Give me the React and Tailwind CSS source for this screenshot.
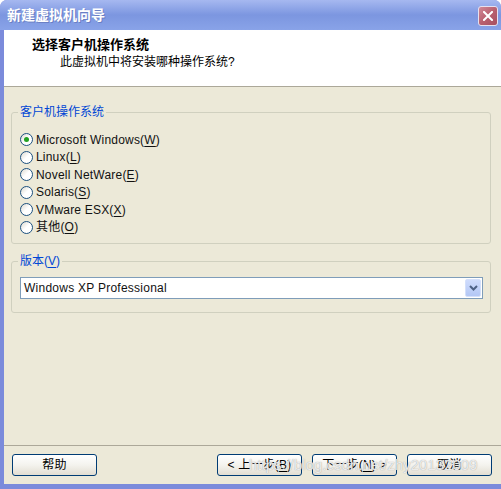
import React from 'react';

const Mn = ({ children }) => <span className="underline underline-offset-[2px]">{children}</span>;

const Radio = ({ checked, children }) => (
  <div className="h-[17.5px] flex items-center">
    <span className="w-[13px] h-[13px] rounded-full border border-[#1c5180] bg-gradient-to-br from-[#dcd9cf] via-white to-white flex items-center justify-center">
      {checked && <span className="w-[5px] h-[5px] rounded-full bg-[#21a121]" />}
    </span>
    <span className="ml-[3px] text-[12px] leading-[14px] tracking-[0.2px] text-[#111]">{children}</span>
  </div>
);

const Button = ({ children }) => (
  <button className="w-[85px] h-[22px] rounded-[3px] border border-[#003c74] bg-gradient-to-b from-white via-[#f4f3ee] to-[#e2ded2] text-[12px] leading-[14px] tracking-[0.2px] text-black flex items-center justify-center">
    {children}
  </button>
);

export default function App() {
  return (
    <div className="w-[501px] h-[489px] bg-white font-['Liberation_Sans','Noto_Sans_CJK_SC',sans-serif] relative overflow-hidden">
      <div className="h-full flex flex-col rounded-t-[7px] bg-[#7b8bdb] overflow-hidden">
        {/* Title bar */}
        <div className="h-[30px] flex justify-between bg-gradient-to-b from-[#a6b8f0] via-[#7c96e0] to-[#89a3e8]">
          <span className="pl-[7px] pt-[6px] text-[14px] leading-[18px] font-bold text-white [text-shadow:1px_1px_0_#6a7fc4]">
            新建虚拟机向导
          </span>
          <span className="mt-[6px] mr-[3px] w-[20px] h-[20px] rounded-[3px] border border-[#e6e0ef] bg-gradient-to-br from-[#d18a98] via-[#b9606f] to-[#a74f60] flex items-center justify-center">
            <svg width="10" height="10" viewBox="0 0 10 10">
              <path d="M1 1L9 9M9 1L1 9" stroke="white" strokeWidth="2" strokeLinecap="square" />
            </svg>
          </span>
        </div>

        <div className="flex-1 flex flex-col ml-[4px] mb-[5px] bg-[#ece9d8]">
          {/* Header */}
          <div className="h-[57px] bg-white border-b border-[#aca899] pl-[28px] pt-[7px]">
            <div className="text-[13px] leading-[16px] font-bold text-black">选择客户机操作系统</div>
            <div className="ml-[28px] mt-[1px] text-[12px] leading-[16px] text-black">此虚拟机中将安装哪种操作系统?</div>
          </div>

          {/* Body */}
          <div className="flex-1 pl-[7px] pr-[10px]">
            <fieldset className="mt-[17px] border border-[#d0d0bf] rounded-[3px]">
              <legend className="ml-[6px] px-[2px] text-[12px] leading-[16px] text-[#0046d5]">客户机操作系统</legend>
              <div className="pl-[8px] pt-[11px] pb-[7px]">
                <Radio checked>Microsoft Windows(<Mn>W</Mn>)</Radio>
                <Radio>Linux(<Mn>L</Mn>)</Radio>
                <Radio>Novell NetWare(<Mn>E</Mn>)</Radio>
                <Radio>Solaris(<Mn>S</Mn>)</Radio>
                <Radio>VMware ESX(<Mn>X</Mn>)</Radio>
                <Radio>其他(<Mn>O</Mn>)</Radio>
              </div>
            </fieldset>

            <fieldset className="mt-[9px] border border-[#d0d0bf] rounded-[3px]">
              <legend className="ml-[6px] px-[2px] text-[12px] leading-[16px] text-[#0046d5]">
                版本(<Mn>V</Mn>)
              </legend>
              <div className="pl-[8px] pr-[7px] pt-[8px] pb-[13px]">
                <div className="h-[22px] border border-[#7f9db9] bg-white flex items-center justify-between">
                  <span className="pl-[3px] text-[12px] leading-[14px] tracking-[0.25px] text-[#111]">Windows XP Professional</span>
                  <span className="mr-[1px] w-[16px] h-[18px] rounded-[2px] border border-[#d4e0fb] bg-gradient-to-b from-[#cfdcfd] to-[#b3c7f5] flex items-center justify-center">
                    <svg width="9" height="6" viewBox="0 0 9 6">
                      <path d="M1 1L4.5 4.5L8 1" stroke="#4d6185" strokeWidth="2" fill="none" />
                    </svg>
                  </span>
                </div>
              </div>
            </fieldset>
          </div>

          {/* Footer */}
          <div className="border-t border-[#aca899] pt-[8px] pb-[8px] pl-[8px] pr-[9px] flex">
            <Button>帮助</Button>
            <div className="ml-auto flex gap-[10px]">
              <Button>&lt; 上一步(<Mn>B</Mn>)</Button>
              <Button>下一步(<Mn>N</Mn>) &gt;</Button>
              <Button>取消</Button>
            </div>
          </div>
        </div>
      </div>

      {/* watermark over the footer */}
      <span className="absolute left-[249px] top-[456px] text-[15px] leading-[18px] text-white/80 [text-shadow:0_0_1px_#8a8a8a] pointer-events-none">
        https://blog.csdn.net/zhy20132009
      </span>
    </div>
  );
}
